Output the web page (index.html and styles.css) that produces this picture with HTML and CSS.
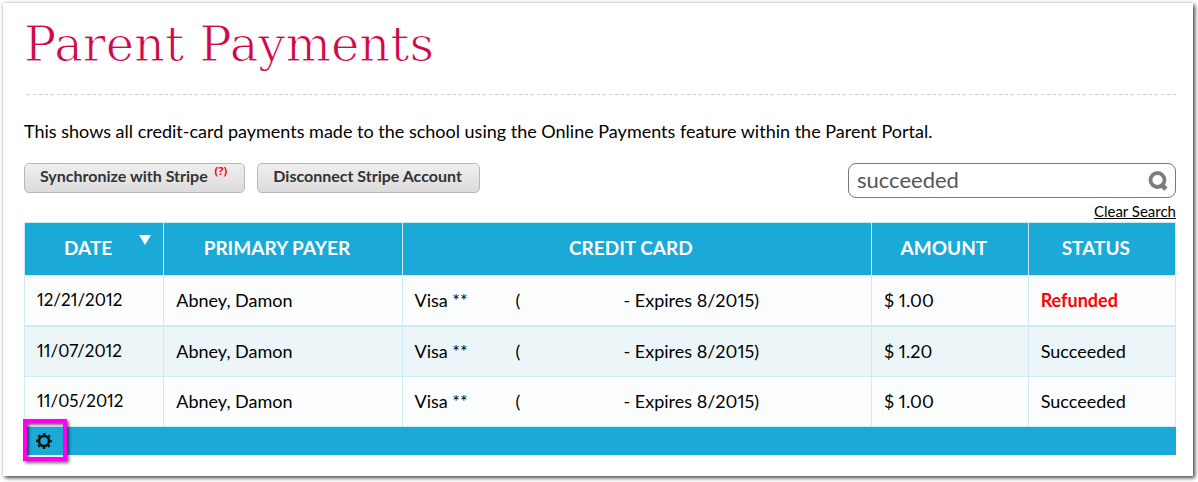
FILE: index.html
```html
<!DOCTYPE html>
<html lang="en">
<head>
<meta charset="utf-8">
<title>Parent Payments</title>
<link rel="stylesheet" href="styles.css">
</head>
<body>
<main class="card">
  <h1 class="title">Parent Payments</h1>
  <hr class="rule">
  <p class="intro">This shows all credit-card payments made to the school using the Online Payments feature within the Parent Portal.</p>
  <div class="toolbar">
    <div class="actions">
      <button class="btn" type="button">Synchronize with Stripe <sup class="help">(?)</sup></button>
      <button class="btn" type="button">Disconnect Stripe Account</button>
    </div>
    <form class="search">
      <div class="search-box">
        <input class="search-input" type="text" value="succeeded" aria-label="Search payments">
        <button class="search-btn" type="button" aria-label="Search">
          <svg width="22" height="22" viewBox="0 0 22 22" fill="none" stroke="#7d7d7d"><circle cx="10.5" cy="10" r="7" stroke-width="3.8"/><path d="M13.5 14l5.5 5" stroke-width="4.6"/></svg>
        </button>
      </div>
      <a class="clear" href="#">Clear Search</a>
    </form>
  </div>
  <table class="payments">
    <colgroup><col class="c-date"><col class="c-payer"><col class="c-card"><col class="c-amount"><col class="c-status"></colgroup>
    <thead>
      <tr>
        <th class="sorted">Date<svg class="arrow" width="12" height="10" viewBox="0 0 12 10"><path d="M0 0h12L6 10z" fill="#fff"/></svg></th>
        <th>Primary Payer</th><th>Credit Card</th><th>Amount</th><th>Status</th>
      </tr>
    </thead>
    <tbody>
      <tr><td class="date">12/21/2012</td><td>Abney, Damon</td><td><div class="cc"><span>Visa **</span><span>(</span><span>- Expires 8/2015)</span></div></td><td>$ 1.00</td><td class="refunded">Refunded</td></tr>
      <tr><td class="date">11/07/2012</td><td>Abney, Damon</td><td><div class="cc"><span>Visa **</span><span>(</span><span>- Expires 8/2015)</span></div></td><td>$ 1.20</td><td>Succeeded</td></tr>
      <tr><td class="date">11/05/2012</td><td>Abney, Damon</td><td><div class="cc"><span>Visa **</span><span>(</span><span>- Expires 8/2015)</span></div></td><td>$ 1.00</td><td>Succeeded</td></tr>
    </tbody>
  </table>
  <div class="footer">
    <button class="gear" type="button" aria-label="Settings">
      <svg width="16" height="16" viewBox="0 0 16 16" fill="none" stroke="#111"><circle cx="8" cy="8" r="5" stroke-width="2.6"/><circle cx="8" cy="8" r="7" stroke-width="2" stroke-dasharray="2.6 2.898" stroke-dashoffset="1.3"/></svg>
    </button>
    <span class="highlight"></span>
  </div>
</main>
</body>
</html>
```

FILE: styles.css
```css
* { box-sizing: border-box; }
body {
  margin: 0;
  padding: 3px 5px 6px 3px;
  background: #fff;
  color: #000;
  font: 18px/24px Lato, "Open Sans", sans-serif;
}
.card {
  padding: 12px 17px 21px 21px;
  background: #fff;
  box-shadow: 2px 2px 4px rgba(0, 0, 0, .7), 0 0 3px rgba(0, 0, 0, .2);
}
.title {
  margin: 0;
  color: #cc0a48;
  font: 400 48px/58px "DejaVu Serif", serif;
  -webkit-text-stroke: 1px #fff;
}
.rule {
  height: 1px;
  margin: 21px 0 24px 3px;
  border: 0;
  background: repeating-linear-gradient(90deg, #ccc 0 3px, transparent 3px 6px);
}
.intro { margin: 0; }
.toolbar {
  display: flex;
  justify-content: space-between;
  margin-top: 20px;
}
.actions { display: flex; align-items: flex-start; gap: 12px; }
.btn {
  height: 30px;
  padding: 0 17px 4px 15px;
  border: 1px solid #b8b8b8;
  border-radius: 5px;
  background: linear-gradient(#efefef, #dcdcdc);
  color: #333;
  font: 700 16px/24px Lato, sans-serif;
}
.help {
  margin-left: 3px;
  color: #f00;
  font: 700 11px/12px "Open Sans", sans-serif;
  vertical-align: 7px;
}
.search { display: flex; flex-direction: column; align-items: flex-end; width: 328px; }
.search-box {
  display: flex;
  align-items: center;
  width: 100%;
  height: 35px;
  padding: 0 6px 0 8px;
  border: 1px solid #777;
  border-radius: 8px;
}
.search-input {
  flex: 1;
  min-width: 0;
  padding: 0 0 2px;
  border: 0;
  outline: 0;
  background: none;
  color: #555;
  font: 22px/28px Lato, sans-serif;
}
.search-btn, .gear { display: flex; padding: 0; border: 0; background: none; }
.clear {
  margin: 7px 0 3px;
  border-bottom: 1px solid #000;
  color: #000;
  font-size: 15px;
  line-height: 13px;
  text-decoration: none;
}
.payments {
  width: 100%;
  border-collapse: collapse;
  table-layout: fixed;
  font-variant-numeric: proportional-nums;
}
.c-date { width: 12.1%; }
.c-payer { width: 20.7%; }
.c-card { width: 40.8%; }
.c-amount { width: 13.6%; }
.payments th, .payments td { border: 1px solid #cdebf4; }
.payments th {
  height: 53px;
  padding: 0 24px 2px 12px;
  background: #1ba9d8;
  color: #fff;
  font-size: 19px;
  font-weight: 700;
  text-transform: uppercase;
}
.payments .sorted { position: relative; }
.arrow { position: absolute; top: 12px; right: 12px; }
.payments td { height: 50px; padding: 0 12px 1px; background: #fcfdff; }
.payments tbody tr:nth-child(even) td { height: 51px; background: #ecf6f9; border-top-width: 2px; }
.payments .date { font-size: 17px; }
.cc { display: grid; grid-template-columns: 101px 108px 1fr; }
.payments .refunded { color: #f00; font-weight: 700; }
.footer {
  position: relative;
  display: flex;
  align-items: center;
  height: 28px;
  padding-left: 12px;
  background: #1ba9d8;
}
.highlight {
  position: absolute;
  top: -8px;
  left: -1px;
  width: 44px;
  height: 42px;
  border: 4px solid #f0e;
  box-shadow: 2px 2px 3px rgba(0, 0, 0, .6), inset 2px 2px 3px rgba(0, 0, 0, .6);
  pointer-events: none;
}
```
